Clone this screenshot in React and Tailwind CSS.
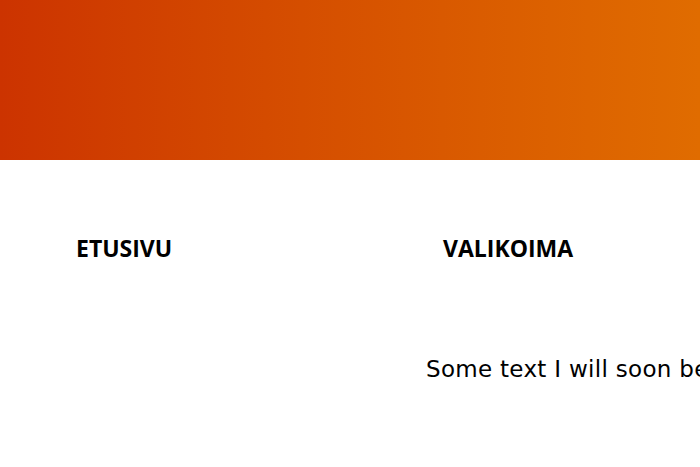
import React from "react";

const App = () => {
  return (
    <div className="w-full min-h-[467px] bg-white overflow-hidden text-black">
      <header className="w-full h-[160px] bg-gradient-to-r from-[#cc3300] to-[#e06c00]"></header>
      <nav className="flex pt-[73px] pl-[76px] font-['Open_Sans',sans-serif]">
        <a className="w-[367px] text-[23px] font-bold leading-[31px]">ETUSIVU</a>
        <a className="text-[23px] font-bold leading-[31px]">VALIKOIMA</a>
      </nav>
      <main className="pt-[92px] pl-[426px] whitespace-nowrap font-['DejaVu_Sans',sans-serif]">
        <p className="text-[23px] leading-[27px] tracking-[0.3px]">Some text I will soon be replacing with real content</p>
      </main>
    </div>
  );
};

export default App;
